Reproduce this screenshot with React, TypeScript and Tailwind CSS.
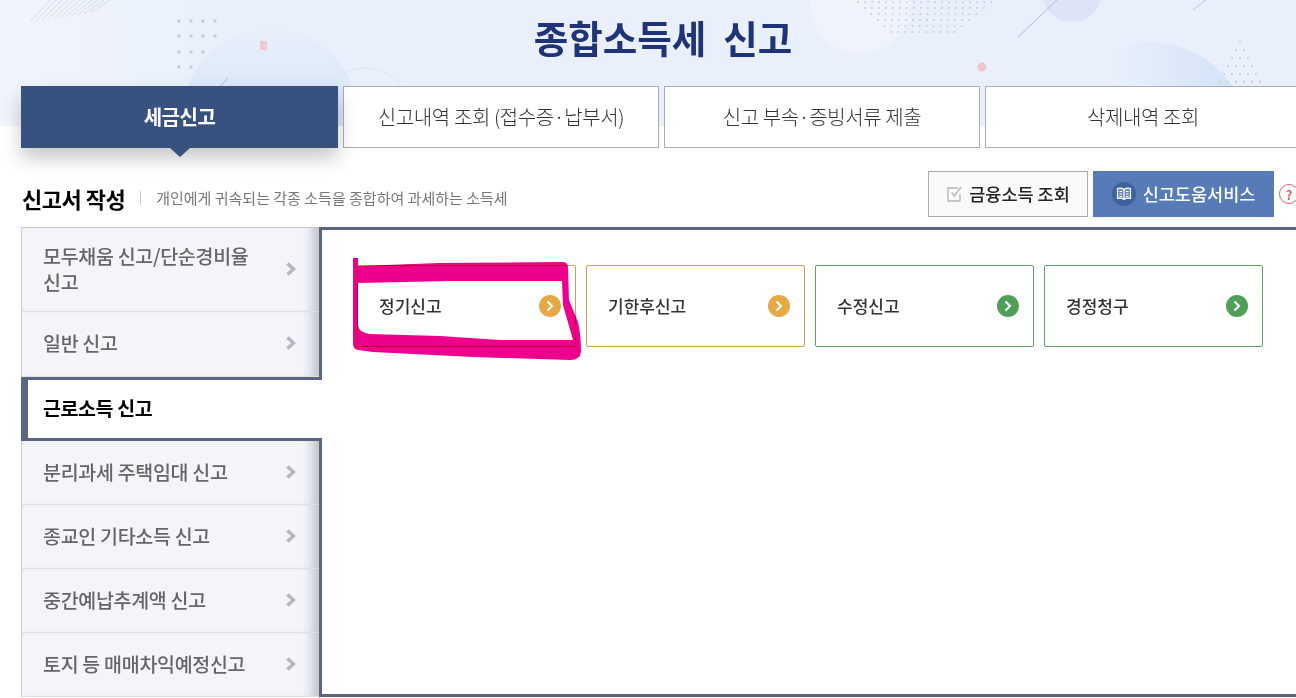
const font = "font-['Noto_Sans_CJK_KR','Noto_Sans',sans-serif]";

const tabs = ["신고내역 조회 (접수증·납부서)", "신고 부속·증빙서류 제출", "삭제내역 조회"];

const menu = [
  { label: "모두채움 신고/단순경비율 신고", h: "h-[85px]" },
  { label: "일반 신고", h: "h-[65px]" },
  { label: "근로소득 신고", h: "h-[64px]", active: true },
  { label: "분리과세 주택임대 신고", h: "h-[64px]" },
  { label: "종교인 기타소득 신고", h: "h-[64px]" },
  { label: "중간예납추계액 신고", h: "h-[64px]" },
  { label: "토지 등 매매차익예정신고", h: "h-[64px]" },
];

const cards = [
  { label: "정기신고", border: "border-[#c4a552]", dot: "bg-[#e6a944]" },
  { label: "기한후신고", border: "border-[#c4a552]", dot: "bg-[#e6a944]" },
  { label: "수정신고", border: "border-[#63a366]", dot: "bg-[#4f9f58]" },
  { label: "경정청구", border: "border-[#63a366]", dot: "bg-[#4f9f58]" },
];

function Dots({ xs, ys, r, fill }: { xs: number[]; ys: number[]; r: number; fill: string }) {
  return (
    <g fill={fill}>
      {ys.map((y) => xs.map((x) => <circle key={`${x}-${y}`} cx={x} cy={y} r={r} />))}
    </g>
  );
}

// header artwork, only a drawing behind the title
function HeaderArt() {
  const halftone: [number, number][] = [];
  for (let y = 2; y < 38; y += 6) {
    const inset = y * 1.1;
    for (let x = 856 + inset; x < 994 - inset; x += 7) halftone.push([x, y]);
  }
  const triangle: [number, number][] = [];
  for (let i = 0; i < 6; i++) {
    for (let j = 0; j <= i; j++) triangle.push([1240 - i * 4 + j * 8, 42 + i * 8]);
  }
  return (
    <svg className="absolute left-0 top-0" width="1296" height="126" viewBox="0 0 1296 126">
      <defs>
        <linearGradient id="bg" x1="0" x2="1" y1="0" y2="0">
          <stop offset="0" stopColor="#f1f5fb" />
          <stop offset="0.18" stopColor="#e9f0fb" />
          <stop offset="1" stopColor="#e9f0fb" />
        </linearGradient>
        <linearGradient id="arcLeft" x1="0" x2="0" y1="0" y2="1">
          <stop offset="0" stopColor="#e8effa" />
          <stop offset="0.6" stopColor="#d5e4f8" />
        </linearGradient>
        <linearGradient id="arcRight" x1="0" x2="1" y1="0" y2="0">
          <stop offset="0.3" stopColor="#e9f0fb" />
          <stop offset="0.85" stopColor="#d6e4f8" />
        </linearGradient>
      </defs>
      <rect width="1296" height="126" fill="url(#bg)" />
      <g stroke="#d5dce8" strokeWidth="1">
        {[0, 6, 12, 18, 24, 30, 36, 42, 48, 54, 60].map((d) => (
          <line key={d} x1={30 + d} y1={22 - d * 0.15} x2={50 + d} y2="0" />
        ))}
      </g>
      <Dots xs={[179, 191, 203, 215]} ys={[21, 36, 52, 67]} r={1.7} fill="#c6ccd8" />
      <circle cx="270" cy="115" r="87" fill="url(#arcLeft)" />
      <circle cx="270" cy="133" r="40" fill="#e9f0fb" />
      <rect x="260" y="41" width="7" height="9" fill="#eecbd3" />
      <line x1="202" y1="106" x2="228" y2="78" stroke="#b5c0d4" />
      <circle cx="365" cy="112" r="44" fill="none" stroke="#dde5f2" />
      <circle cx="860" cy="4" r="50" fill="#eef3fc" />
      {halftone.map(([x, y]) => (
        <circle key={`${x}-${y}`} cx={x} cy={y} r="0.9" fill="#c3cad8" />
      ))}
      <circle cx="1072" cy="-8" r="30" fill="#dfe3f8" />
      <line x1="1018" y1="37" x2="1057" y2="0" stroke="#aeb8cf" />
      <line x1="1193" y1="10" x2="1206" y2="0" stroke="#b9c3d7" />
      <circle cx="982" cy="67" r="4.5" fill="#f0c4cc" />
      <circle cx="1150" cy="140" r="98" fill="url(#arcRight)" />
      <circle cx="1140" cy="150" r="66" fill="#e9f0fb" />
      {triangle.map(([x, y]) => (
        <circle key={`${x}-${y}`} cx={x} cy={y} r="1" fill="#c3cad8" />
      ))}
    </svg>
  );
}

function Chevron() {
  return (
    <svg width="10" height="14" viewBox="0 0 10 14" className="shrink-0">
      <path d="M1.500 1.500 7.500 7 1.500 12.500" fill="none" stroke="#b4b7bf" strokeWidth="3.500" />
    </svg>
  );
}

export default function App() {
  return (
    <div className={`relative h-[698px] w-[1296px] overflow-hidden bg-white ${font}`}>
      <HeaderArt />

      <div className="relative">
        <h1 className="flex h-[86px] items-center justify-center pb-[11px] pl-[30px] text-[37.500px] font-bold text-[#1f3478]">
          종합소득세&nbsp; 신고
        </h1>

        <div className="ml-[21px] flex w-[1290px] gap-[5px]">
          <div className="relative flex h-[62px] w-[317px] shrink-0 items-center justify-center bg-[#38527f] text-[20px] font-bold tracking-[-0.500px] text-white shadow-[0_10px_18px_rgba(0,0,0,0.22)]">
            세금신고
            <span className="absolute left-1/2 top-full h-0 w-0 -translate-x-1/2 border-x-[10px] border-t-[9px] border-x-transparent border-t-[#38527f]" />
          </div>
          {tabs.map((t) => (
            <div
              key={t}
              className="flex h-[62px] w-[316px] shrink-0 items-center justify-center border border-[#a9adb5] bg-white text-[20px] font-light tracking-[-0.400px] text-[#333]"
            >
              {t}
            </div>
          ))}
        </div>

        <div className="ml-[21px] flex h-[79px] w-[1278px] items-start justify-between">
          <div className="mt-[35px] flex items-center">
            <h2 className="pl-px text-[22px] font-bold leading-[30px] tracking-[-0.500px] text-black">신고서 작성</h2>
            <span className="ml-[15px] h-[14px] w-px bg-[#c8c8c8]" />
            <p className="ml-[15px] pt-px text-[15px] text-[#777]">
              개인에게 귀속되는 각종 소득을 종합하여 과세하는 소득세
            </p>
          </div>
          <div className="mt-[23px] flex items-center">
            <button className="flex h-[46px] w-[160px] items-center justify-center gap-[5px] border border-[#a9a9a9] bg-[#fafafa] text-[17.500px] font-medium text-[#222]">
              <svg width="18" height="18" viewBox="0 0 18 18" fill="none">
                <path d="M14 9v7H2V3h10" stroke="#b5b5b5" strokeWidth="1.300" />
                <path d="M5.500 7.500 8.500 11 15 2" stroke="#b5b5b5" strokeWidth="1.300" />
              </svg>
              금융소득 조회
            </button>
            <button className="ml-[5px] flex h-[46px] w-[181px] items-center justify-center gap-[7px] bg-[#567bb6] text-[17.500px] font-medium text-white">
              <span className="flex h-[24px] w-[24px] items-center justify-center rounded-full bg-[#3f629b]">
                <svg width="16" height="14" viewBox="0 0 16 14" fill="none" stroke="white" strokeWidth="1.200">
                  <path d="M8 2.500C6 1 3.500 1 1.500 1.500v10C3.500 11 6 11 8 12.500c2-1.500 4.500-1.500 6.500-1v-10C12.500 1 10 1 8 2.500Z" fill="white" fillOpacity="0.25" />
                  <path d="M8 2.500v10M3.500 4.500h2.500M3.500 7h2.500M3.500 9.500h2.500M10 4.500h2.500M10 7h2.500M10 9.500h2.500" />
                </svg>
              </span>
              신고도움서비스
            </button>
            <span className="ml-[5px] flex h-[20px] w-[20px] shrink-0 items-center justify-center rounded-full border-[1.500px] border-[#c9686a] text-[13px] font-bold leading-none text-[#c9686a]">
              ?
            </span>
          </div>
        </div>

        <div className="ml-[21px] flex">
          <ul className="w-[298px] shrink-0">
            {menu.map((m) =>
              m.active ? (
                <li
                  key={m.label}
                  className={`relative z-10 -mr-[3px] flex items-center border-y-[3px] border-l-[7px] border-[#5a6682] bg-white pb-[2px] pl-[15px] text-[19.500px] font-bold tracking-[-0.400px] text-black ${m.h}`}
                >
                  {m.label}
                </li>
              ) : (
                <li
                  key={m.label}
                  className={`flex items-center justify-between gap-[30px] border-b border-l border-[#dcdfe6] border-l-[#c9ccd3] bg-[#f3f5fa] pb-[2px] pl-[21px] pr-[23px] text-[19.500px] font-medium leading-[26px] tracking-[-0.300px] text-[#666] shadow-[inset_-14px_0_12px_-8px_rgba(0,0,0,0.22)] first:border-t first:border-t-[#c9ccd3] ${m.h}`}
                >
                  <span className="break-keep">{m.label}</span>
                  <Chevron />
                </li>
              ),
            )}
          </ul>

          <div className="h-[470px] w-[990px] shrink-0 border-[3px] border-[#5a6682] bg-white pl-[35px] pt-[35px]">
            <div className="flex gap-[10px]">
              {cards.map((c) => (
                <div
                  key={c.label}
                  className={`flex h-[82px] w-[219px] items-center justify-between rounded-[2px] border bg-white pl-[21px] pr-[14px] text-[17px] font-medium text-[#333] ${c.border}`}
                >
                  {c.label}
                  <span className={`flex h-[22px] w-[22px] items-center justify-center rounded-full ${c.dot}`}>
                    <svg width="8" height="12" viewBox="0 0 8 12">
                      <path d="M1.500 1.500 6 6 1.500 10.500" fill="none" stroke="white" strokeWidth="2" />
                    </svg>
                  </span>
                </div>
              ))}
            </div>
          </div>
        </div>
      </div>

      {/* marker scribble drawn over the first card */}
      <svg className="absolute left-0 top-0 z-20 mix-blend-multiply" width="1296" height="698" viewBox="0 0 1296 698">
        <path
          fillRule="evenodd"
          fill="#ec008c"
          d="M353 258 358 258 358 266 440 263 563 262Q568 262 568 268L569 300 578 322Q581 335 581 352 580 360 570 360L473 357 373 352 358 350Q353 349 353 344ZM358 283 450 281 562 281 563 305 573 340 500 340 440 336 370 334Q359 333 358 325Z"
        />
      </svg>
    </div>
  );
}
